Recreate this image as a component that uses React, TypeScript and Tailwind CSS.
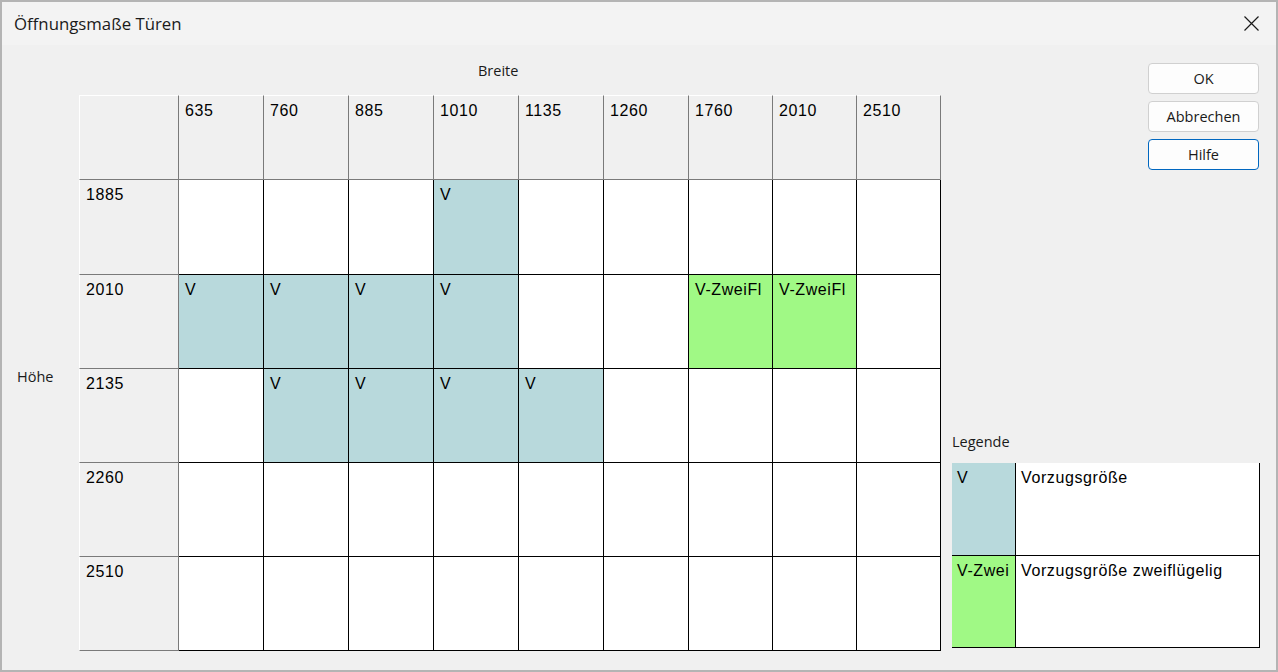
import React from "react";

const widths = ["635", "760", "885", "1010", "1135", "1260", "1760", "2010", "2510"];
const heights = ["1885", "2010", "2135", "2260", "2510"];

// cell values keyed by "row-col"
const cells: Record<string, { label: string; kind: "v" | "z" }> = {
    "1885-1010": { label: "V", kind: "v" },
    "2010-635": { label: "V", kind: "v" },
    "2010-760": { label: "V", kind: "v" },
    "2010-885": { label: "V", kind: "v" },
    "2010-1010": { label: "V", kind: "v" },
    "2010-1760": { label: "V-ZweiFl", kind: "z" },
    "2010-2010": { label: "V-ZweiFl", kind: "z" },
    "2135-760": { label: "V", kind: "v" },
    "2135-885": { label: "V", kind: "v" },
    "2135-1010": { label: "V", kind: "v" },
    "2135-1135": { label: "V", kind: "v" },
};

const gridFont = "font-['Liberation_Sans',sans-serif] text-[16px] leading-[18px] tracking-[0.6px] text-black";
const uiFont = "font-['Open_Sans',sans-serif] text-[14.5px] leading-[20px] text-[#1a1a1a]";

function Button({ label, focused }: { label: string; focused?: boolean }) {
    return (
        <div
            className={`mr-[1px] flex h-[31px] w-[111px] items-center justify-center self-end rounded-[4px] border bg-[#fdfdfd] ${uiFont} ${
                focused ? "border-[#0067c0]" : "border-[#d0d0d0]"
            }`}
        >
            {label}
        </div>
    );
}

function Grid() {
    return (
        <div className="grid grid-cols-[100px_85px_85px_85px_85px_85px_85px_84px_84px_84px] grid-rows-[85px_95px_94px_94px_94px_94px]">
            <div className="border-l border-t border-r border-b border-l-white border-t-white border-r-[#7a7a7a] border-b-[#7a7a7a]" />
            {widths.map((w) => (
                <div
                    key={w}
                    className={`border-t border-r border-b border-t-white border-r-[#7a7a7a] border-b-[#7a7a7a] pl-[6px] pt-[6px] ${gridFont}`}
                >
                    {w}
                </div>
            ))}
            {heights.map((h) => (
                <React.Fragment key={h}>
                    <div
                        className={`border-l border-r border-b border-l-white border-r-[#7a7a7a] border-b-[#7a7a7a] pl-[6px] pt-[6px] ${gridFont}`}
                    >
                        {h}
                    </div>
                    {widths.map((w) => {
                        const c = cells[`${h}-${w}`];
                        const bg = c ? (c.kind === "v" ? "bg-[#b8d9dc]" : "bg-[#a0f985]") : "bg-white";
                        return (
                            <div
                                key={w}
                                className={`overflow-hidden whitespace-nowrap border-r border-b border-black pl-[6px] pt-[6px] ${bg} ${gridFont}`}
                            >
                                {c?.label}
                            </div>
                        );
                    })}
                </React.Fragment>
            ))}
        </div>
    );
}

function Legend() {
    const rows = [
        { code: "V", text: "Vorzugsgröße", bg: "bg-[#b8d9dc]", h: "h-[93px]" },
        { code: "V-Zwei", text: "Vorzugsgröße zweiflügelig", bg: "bg-[#a0f985]", h: "h-[92px]" },
    ];
    return (
        <div className="flex flex-col">
            {rows.map((r) => (
                <div key={r.code} className={`flex ${r.h}`}>
                    <div className={`w-[64px] overflow-hidden whitespace-nowrap border-r border-b border-black pl-[5px] pt-[6px] ${r.bg} ${gridFont}`}>
                        {r.code}
                    </div>
                    <div className={`flex-1 border-r border-b border-black bg-white pl-[5px] pt-[6px] ${gridFont}`}>{r.text}</div>
                </div>
            ))}
        </div>
    );
}

export default function App() {
    return (
        <div className="flex h-[672px] w-[1278px] flex-col border-2 border-[#b4b4b4] bg-[#f0f0f0]">
            <div className="flex h-[43px] items-center justify-between bg-[#f3f3f3] pl-[12px] pr-[17px]">
                <span className="font-['Open_Sans',sans-serif] text-[16.8px] text-[#1a1a1a]">Öffnungsmaße Türen</span>
                <svg width="15" height="15" viewBox="0 0 15 15" className="text-[#1a1a1a]">
                    <path d="M0.5 0.5 L14.5 14.5 M14.5 0.5 L0.5 14.5" stroke="currentColor" strokeWidth="1.2" fill="none" />
                </svg>
            </div>
            <div className="flex flex-1">
                <div className="flex w-[77px] items-center pb-[19px] pl-[15px] pt-[58px]">
                    <span className={uiFont}>Höhe</span>
                </div>
                <div className="flex w-[862px] flex-col">
                    <div className={`h-[50px] pl-[399px] pt-[16px] ${uiFont}`}>Breite</div>
                    <Grid />
                </div>
                <div className="flex flex-1 flex-col gap-[7px] pb-[22px] pl-[11px] pr-[16px] pt-[18px]">
                    <Button label="OK" />
                    <Button label="Abbrechen" />
                    <Button label="Hilfe" focused />
                    <div className="flex-1" />
                    <div className="flex flex-col">
                        <div className={`mb-[11px] ${uiFont}`}>Legende</div>
                        <Legend />
                    </div>
                </div>
            </div>
        </div>
    );
}
